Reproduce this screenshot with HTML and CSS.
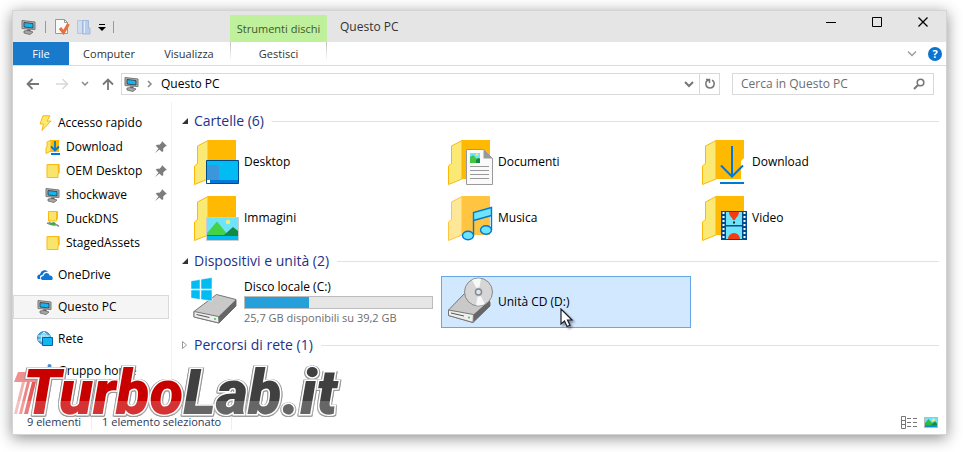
FILE: index.html
```html
<!DOCTYPE html>
<html lang="it">

<head>
    <meta charset="UTF-8" />
    <meta name="viewport" content="width=device-width,initial-scale=1.0" />
    <title>Questo PC</title>
    <link rel="stylesheet" href="styles.css">
</head>

<body>
    <svg class="sprite" aria-hidden="true">
        <symbol id="i-pc" viewBox="0 0 16 16">
            <path d="M1 1.500l13 1.500v7.500L1 9.500z" fill="#b4b4b4" stroke="#777" />
            <path d="M3 3.500l9 1v4.500L3 8z" fill="#18b4f0" stroke="#333" stroke-width=".8" />
            <path d="M6 10.500h3.500v1.500H6z" fill="#555" />
            <path d="M3 12l4-.5 5 1.500-3 2.500-6-1.500z" fill="#a8a8a8" stroke="#666" stroke-width=".8" />
        </symbol>
        <symbol id="i-folder" viewBox="0 0 16 16">
            <path d="M2 1.500h12V10l-1 .5v4H2z" fill="#f9e56c" stroke="#fbb911" />
            <path d="M12.500 1.500h2V10l-1.500.5z" fill="#fbb911" />
        </symbol>
        <symbol id="i-pin" viewBox="0 0 12 12">
            <path d="M7 0l5 5-1.500.3-2.300 2.200v2.800L7 11 4.500 8.500 0 12l3.500-4.500L1 5l.7-1.200h2.800L6.700 1.500z" fill="#7c7c7c" />
        </symbol>
        <symbol id="i-picture" viewBox="0 0 14 11">
            <rect x=".5" y=".5" width="13" height="10" fill="#6ee4fa" stroke="#bbb" />
            <circle cx="9.500" cy="3" r="1.500" fill="#f8ea72" />
            <path d="M1 8V6l3.500-4L8 6l3-2 2 2v2z" fill="#34b845" />
            <path d="M7 8l4-3 2 2v1z" fill="#128a42" />
            <path d="M1 8h12v2H1z" fill="#0a90cc" />
        </symbol>
        <symbol id="b-folder" viewBox="0 0 48 48">
            <path d="M17 2h28v39H17z" fill="#ffb900" />
            <path d="M3.500 46.500V28l3-2.500V8L17 2.500V41z" fill="#faea75" stroke="#f9b80c" />
        </symbol>
    </svg>

    <div class="window">
        <header class="titlebar">
            <div class="quick">
                <svg class="i16"><use href="#i-pc" /></svg>
                <span class="sep"></span>
                <button class="quick-btn" aria-label="Proprietà">
                    <svg width="16" height="17" viewBox="0 0 16 17">
                        <path d="M1.500 1.500h9l3 3v11h-12z" fill="#fafafa" stroke="#999" />
                        <path d="M10.500 1.500v3h3" fill="none" stroke="#999" />
                        <path d="M6 10l3.500 4.500L14.500 6" fill="none" stroke="#e8703c" stroke-width="3" />
                    </svg>
                </button>
                <button class="quick-btn folder" aria-label="Nuova cartella">
                    <svg width="14" height="16" viewBox="0 0 14 16">
                        <path d="M.5 1.500h7v13h-7z" fill="#cfddf0" stroke="#b4c6e0" />
                        <path d="M5.500 1.500h6V9h1.500v6H5.500z" fill="#b9cdea" stroke="#a3bade" />
                        <path d="M7.500 2v12" stroke="#e4edf8" />
                    </svg>
                </button>
                <button class="quick-btn" aria-label="Personalizza">
                    <svg width="8" height="8" viewBox="0 0 8 8"><path d="M1 1h6v1H1zM0 4h8L4 8z" /></svg>
                </button>
                <span class="sep"></span>
            </div>
            <div class="context">Strumenti dischi</div>
            <h1 class="title">Questo PC</h1>
            <div class="caption">
                <button aria-label="Riduci a icona"><svg width="12" height="12"><path d="M1 6.500h10" stroke="#000" /></svg></button>
                <button aria-label="Ingrandisci"><svg width="12" height="12"><path d="M1.500 1.500h9v9h-9z" fill="none" stroke="#000" /></svg></button>
                <button aria-label="Chiudi"><svg width="12" height="12"><path d="M1.500 1.500l9 9M10.500 1.500l-9 9" stroke="#000" stroke-width="1.300" /></svg></button>
            </div>
        </header>

        <nav class="ribbon">
            <button class="tab file">File</button>
            <button class="tab">Computer</button>
            <button class="tab">Visualizza</button>
            <button class="tab manage">Gestisci</button>
            <div class="ribbon-end">
                <button aria-label="Espandi barra"><svg width="10" height="7"><path d="M1 1.500l4 4 4-4" fill="none" stroke="#999" stroke-width="1.300" /></svg></button>
                <button class="help" aria-label="Guida">?</button>
            </div>
        </nav>

        <div class="navbar">
            <button class="nav-btn" aria-label="Indietro"><svg width="14" height="12"><path d="M13 6H2M6.500 1L1.500 6l5 5" fill="none" stroke="#777" stroke-width="1.800" /></svg></button>
            <button class="nav-btn" aria-label="Avanti"><svg width="14" height="12"><path d="M1 6h11M7.500 1l5 5-5 5" fill="none" stroke="#d8d8d8" stroke-width="1.500" /></svg></button>
            <button class="nav-btn recent" aria-label="Percorsi recenti"><svg width="8" height="6"><path d="M1 1l3 3 3-3" fill="none" stroke="#888" stroke-width="1.500" /></svg></button>
            <button class="nav-btn up" aria-label="Su"><svg width="12" height="12"><path d="M6 12V2M1 6.500l5-5 5 5" fill="none" stroke="#777" stroke-width="1.800" /></svg></button>
            <div class="address">
                <svg class="i16"><use href="#i-pc" /></svg>
                <svg class="crumb" width="6" height="8"><path d="M1 1l3 3-3 3" fill="none" stroke="#888" stroke-width="1.500" /></svg>
                <span class="path">Questo PC</span>
                <button class="drop" aria-label="Percorsi precedenti"><svg width="10" height="7"><path d="M1 1l4 4 4-4" fill="none" stroke="#777" stroke-width="2" /></svg></button>
                <button class="refresh" aria-label="Aggiorna"><svg width="12" height="12"><path d="M2 1.500h3.500V5M5 2C2 2.500 1.500 5 2 7c1 4 7 4 8 0 .5-2-.5-4-2-4.800" fill="none" stroke="#777" stroke-width="1.500" /></svg></button>
            </div>
            <div class="search">
                <input type="search" aria-label="Cerca" placeholder="Cerca in Questo PC">
                <svg width="12" height="12"><circle cx="7.500" cy="4.500" r="3.300" fill="none" stroke="#777" stroke-width="1.600" /><path d="M5 7L1 11" stroke="#777" stroke-width="2" /></svg>
            </div>
        </div>

        <div class="content">
            <nav class="sidebar">
                <a href="#" class="row">
                    <svg class="i16" viewBox="0 0 16 16"><path d="M6 .8h7L10 6h4L5 15.500 6.500 9H3z" fill="#fcea6a" stroke="#f7b320" /></svg>
                    Accesso rapido
                </a>
                <a href="#" class="row sub">
                    <svg class="i16" viewBox="0 0 16 16"><path d="M5 1h9v12H5z" fill="#ffb900" /><path d="M1 14.500V9l1-1V3l4-2v11z" fill="#f9e56c" stroke="#fbb911" /><path d="M10 2v9M6 7.500l4 4 4-4M6 15h9" fill="none" stroke="#0078d7" stroke-width="1.800" /></svg>
                    Download
                    <svg class="pin"><use href="#i-pin" /></svg>
                </a>
                <a href="#" class="row sub">
                    <svg class="i16"><use href="#i-folder" /></svg>
                    OEM Desktop
                    <svg class="pin"><use href="#i-pin" /></svg>
                </a>
                <a href="#" class="row sub">
                    <svg class="i16"><use href="#i-pc" /></svg>
                    shockwave
                    <svg class="pin"><use href="#i-pin" /></svg>
                </a>
                <a href="#" class="row sub">
                    <svg class="i16" viewBox="0 0 16 16"><path d="M3.500.5h9V8l-1 .5V10h-8z" fill="#f9e56c" stroke="#fbb911" /><path d="M11 1h2v7l-2 1z" fill="#fbb911" /><path d="M2 12l4 1.500 6 .5 2 1.500M4 11l3 3" fill="none" stroke="#888" stroke-width="1.500" /><path d="M5 12l4-1 2 1.500-2 2-4-1z" fill="#2fae4b" /></svg>
                    DuckDNS
                </a>
                <a href="#" class="row sub">
                    <svg class="i16"><use href="#i-folder" /></svg>
                    StagedAssets
                </a>
                <a href="#" class="row top">
                    <svg class="i16" viewBox="0 0 16 16"><path d="M1 12C-1 10 1 7 3 7.500 4 3 9 2 11 5 8 4 6 6 5.500 8 3 8 2.500 10 3.500 12z" fill="#0f6fc6" /><path d="M5 13c-2-1.500-1-4 1.500-4C7 5.500 11.500 5 12.500 8.500c3-.5 4 3 2.500 4.500z" fill="#0f78d4" /></svg>
                    OneDrive
                </a>
                <a href="#" class="row top selected">
                    <svg class="i16"><use href="#i-pc" /></svg>
                    Questo PC
                </a>
                <a href="#" class="row top">
                    <svg class="i16" viewBox="0 0 16 16"><circle cx="7" cy="7" r="6.400" fill="#4fb5e8" stroke="#1c7fc0" /><path d="M1 5h12M1 9h12M7 .5v13M7 1C3.500 4 3.500 10 7 13M7 1c3.500 3 3.500 6 3 9" fill="none" stroke="#d3effc" /><path d="M5.500 6.500h10v8h-10z" fill="#10b8f2" stroke="#0a5ea8" /></svg>
                    Rete
                </a>
                <a href="#" class="row top">
                    <svg class="i16" viewBox="0 0 16 16"><circle cx="2.500" cy="8" r="2.500" fill="#3b7fc4" /><circle cx="9.500" cy="8" r="4" fill="#5da58d" /><circle cx="12.500" cy="3" r="2" fill="#4b8cc8" /></svg>
                    Gruppo home
                </a>
            </nav>

            <main class="main">
                <h2 class="group"><svg width="8" height="8"><path d="M7 1v6H1z" fill="#333" /></svg>Cartelle (6)</h2>
                <div class="tiles">
                    <a href="#" class="tile">
                        <svg class="i48" viewBox="0 0 48 48">
                            <use href="#b-folder" />
                            <path d="M15.500 22.500h32v23h-32z" fill="#00bcf2" stroke="#004b8b" />
                            <path d="M16 27h12v15H16z" fill="#3c96dc" />
                            <path d="M16 42h31v3H16z" fill="#0078d7" />
                            <path d="M16 42h3v3h-3z" fill="#fff" />
                        </svg>
                        Desktop
                    </a>
                    <a href="#" class="tile">
                        <svg class="i48" viewBox="0 0 48 48">
                            <use href="#b-folder" />
                            <path d="M21.500 11.500h17l9 9v26h-26z" fill="#fafafa" stroke="#999" />
                            <path d="M38.500 11.500v9h9z" fill="#999" />
                            <path d="M25 15h10v10H25z" fill="#6ee4fa" />
                            <path d="M25 25v-6l3-2 4 4 3-1v5z" fill="#42c83c" />
                            <path d="M31 25v-3l2-2 2 1v4z" fill="#128a42" />
                            <circle cx="32" cy="16.500" r="1.200" fill="#f8ea72" />
                            <path d="M25 28.500h19M25 32.500h19M25 36.500h19M25 40.500h19" stroke="#999" />
                        </svg>
                        Documenti
                    </a>
                    <a href="#" class="tile">
                        <svg class="i48" viewBox="0 0 48 48">
                            <use href="#b-folder" />
                            <path d="M45 20l-3 3v18h3z" fill="#fff" />
                            <path d="M33 8v30M22 27.500l11 11 11-11M21 45h24" fill="none" stroke="#0078d7" stroke-width="2" />
                        </svg>
                        Download
                    </a>
                    <a href="#" class="tile">
                        <svg class="i48" viewBox="0 0 48 48">
                            <use href="#b-folder" />
                            <path d="M15.500 23.500h32v23h-32z" fill="#6ee4fa" stroke="#ccc" />
                            <circle cx="37" cy="28" r="2.200" fill="#f8ea72" />
                            <path d="M16 39l10-11.500L37 41H16z" fill="#46d246" />
                            <path d="M33 41l9-8 5 4v4z" fill="#128a42" />
                            <path d="M16 41h31v1.500H16z" fill="#128a42" />
                            <path d="M16 42h31v4H16z" fill="#00bcf2" />
                        </svg>
                        Immagini
                    </a>
                    <a href="#" class="tile">
                        <svg class="i48" viewBox="0 0 48 48">
                            <path d="M17 2h28v39H17z" fill="#ffc440" />
                            <path d="M3.500 46.500V28l3-2.500V8L17 2.500V41z" fill="#ffe798" stroke="#ffc440" />
                            <path d="M28.500 18.500l18-5v8l-18 5z" fill="#6ee4fa" />
                            <path d="M28.500 42V18.500l18-5V36M28.500 26.500l18-5" fill="none" stroke="#0078d7" stroke-width="1.400" />
                            <ellipse cx="23" cy="41.500" rx="5.500" ry="4.300" fill="#6ee4fa" stroke="#0078d7" stroke-width="1.400" />
                            <ellipse cx="41" cy="36" rx="5.500" ry="4.300" fill="#6ee4fa" stroke="#0078d7" stroke-width="1.400" />
                        </svg>
                        Musica
                    </a>
                    <a href="#" class="tile">
                        <svg class="i48" viewBox="0 0 48 48">
                            <use href="#b-folder" />
                            <path d="M22 17h26v29H22z" fill="#004b8b" />
                            <path d="M27 18h16v13H27zM27 32.500h16V45H27z" fill="#6ee4fa" />
                            <path d="M30 18h10c0 4-3 5-4 8h-2c-1-3-4-4-4-8z" fill="#f43c14" />
                            <path d="M34 27.500h2v2h-2z" fill="#222" />
                            <path d="M29 45a6 6 0 0 1 12 0z" fill="#f43c14" />
                            <path d="M24.500 18v28M45.500 18v28" stroke="#fff" stroke-width="2" stroke-dasharray="2 2" />
                        </svg>
                        Video
                    </a>
                </div>

                <h2 class="group"><svg width="8" height="8"><path d="M7 1v6H1z" fill="#333" /></svg>Dispositivi e unità (2)</h2>
                <div class="tiles">
                    <a href="#" class="tile">
                        <svg class="i48" viewBox="0 0 48 48">
                            <path d="M3 33.500L25.500 16.500 45 21.500V28L28 45 3 39z" fill="#c9c9c9" stroke="#777" />
                            <path d="M27.500 38.500L45 21.500V28L28 45z" fill="#666" />
                            <path d="M3 33.500l24.500 5L28 45 3 39z" fill="#eee" stroke="#777" />
                            <path d="M5.500 36.500l13 3" stroke="#555" />
                            <circle cx="24" cy="41" r="1" fill="#32d050" />
                            <path d="M0 3l9-1.500V11H0zM10 1.300L21-.5V11H10zM0 12h9v9.500L0 20zM10 12h11v11l-11-1.500z" fill="#00bcf2" stroke="#fff" stroke-width=".5" />
                        </svg>
                        <span class="drive">
                            <span>Disco locale (C:)</span>
                            <progress value="34" max="100" aria-label="Spazio usato"></progress>
                            <span class="free">25,7 GB disponibili su 39,2 GB</span>
                        </span>
                    </a>
                    <a href="#" class="tile selected">
                        <svg class="i48" viewBox="0 0 48 48">
                            <path d="M3.500 32L19 16l26 8v4L28 44.500l-24.500-7z" fill="#c9c9c9" stroke="#777" />
                            <path d="M28.500 36.500L45 22v6L28 44.500z" fill="#666" />
                            <path d="M3.500 32l25 4.500-.5 8-24.500-7z" fill="#eee" stroke="#777" />
                            <path d="M6 35l13 3" stroke="#555" />
                            <circle cx="24" cy="39.500" r="1" fill="#32d050" />
                            <circle cx="33.500" cy="14" r="14" fill="#d6d6d6" stroke="#888" />
                            <path d="M33.500 14L27 2a13.500 13.500 0 0 1 9-1.200zM33.500 14L40 26a13.500 13.500 0 0 1-9 1.300z" fill="#f8f8f8" />
                            <circle cx="33.500" cy="14" r="4.500" fill="#ccc" />
                            <circle cx="33.500" cy="14" r="3" fill="#d4e8fb" stroke="#888" stroke-width="1.300" />
                        </svg>
                        Unità CD (D:)
                        <svg class="cursor" width="14" height="20" viewBox="0 0 14 20"><path d="M1 1v15l3.500-3 2.500 5.500 3-1.300-2.500-5.200H12z" fill="#fff" stroke="#1c1c2c" stroke-width="1.200" /></svg>
                    </a>
                </div>

                <h2 class="group closed"><svg width="8" height="8"><path d="M1.500.5v7l4-3.500z" fill="#fff" stroke="#999" /></svg>Percorsi di rete (1)</h2>
            </main>
        </div>

        <footer class="status">
            <span class="count">9 elementi</span>
            <span class="count">1 elemento selezionato</span>
            <div class="views">
                <button aria-label="Dettagli"><svg width="16" height="13" viewBox="0 0 16 13"><path d="M.5.5h4v12h-4zM.5 4.500h4M.5 8.500h4M6 2.500h4M12 2.500h4M6 6.500h4M12 6.500h4M6 10.500h4M12 10.500h4" fill="none" stroke="#777" /></svg></button>
                <button aria-label="Icone grandi"><svg width="14" height="11"><use href="#i-picture" /></svg></button>
            </div>
        </footer>

        <div class="watermark">
            <svg class="streaks" width="30" height="44" viewBox="0 0 30 44">
                <path d="M5 1h25l-3 10H1z" fill="#d22" opacity=".5" />
                <path d="M9 11h3L4 43H1z" fill="#d22" opacity=".35" />
                <path d="M14 11h3L9 43H6z" fill="#d22" opacity=".55" />
                <path d="M19 11h4l-8 32h-4z" fill="#d22" opacity=".75" />
            </svg>
            <span class="brand"><span class="turbo">Turbo</span><span class="lab">Lab.it</span></span>
        </div>
    </div>
</body>

</html>
```
FILE: styles.css
```css
* {
    margin: 0;
    padding: 0;
    box-sizing: border-box;
}

body {
    min-height: 100vh;
    display: flex;
    padding: 10px 16px 17px 12px;
    font-family: "Open Sans", "Noto Sans", sans-serif;
    font-size: 12px;
    line-height: 16px;
    background: #fff;
    color: #000;
}

button {
    border: none;
    background: none;
    font: inherit;
    color: inherit;
    display: flex;
    align-items: center;
    justify-content: center;
}

a {
    color: inherit;
    text-decoration: none;
}

svg {
    flex-shrink: 0;
    display: block;
}

.sprite {
    position: absolute;
    width: 0;
    height: 0;
}

.i16 {
    width: 16px;
    height: 16px;
}

.i48 {
    width: 48px;
    height: 48px;
    overflow: visible;
}

.window {
    position: relative;
    flex: 1;
    display: flex;
    flex-direction: column;
    border: 1px solid #d4d4d4;
    background: #fff;
    box-shadow: 0 3px 14px rgba(0, 0, 0, 0.45);
}

/* Title bar */
.titlebar {
    display: flex;
    height: 31px;
    background: #e5e5e5;
}

.quick {
    display: flex;
    align-items: center;
    gap: 8px;
    width: 217px;
    padding-left: 8px;
}

.sep {
    width: 1px;
    height: 12px;
    background: #999;
}

.quick-btn {
    margin-right: -1px;
}

.context {
    width: 97px;
    margin-top: 4px;
    font-size: 11px;
    line-height: 28px;
    text-align: center;
    background: #bff09b;
    color: #3b5a2b;
    white-space: nowrap;
}

.title {
    padding-left: 13px;
    font-size: 12px;
    font-weight: 400;
    line-height: 32px;
    color: #333;
}

.caption {
    display: flex;
    margin-left: auto;
}

.caption button {
    width: 46px;
    height: 22px;
}

/* Ribbon */
.ribbon {
    display: flex;
    height: 24px;
    font-size: 11px;
    border-bottom: 1px solid #dadbdc;
}

.tab {
    width: 80px;
    color: #333;
}

.tab.file {
    width: 56px;
    background: #1979ca;
    color: #fff;
}

.tab.manage {
    width: 97px;
    margin-left: 1px;
    border: solid;
    border-width: 0 1px;
    border-image: linear-gradient(#bbb, #fff 80%) 1;
}

.ribbon-end {
    display: flex;
    align-items: center;
    gap: 11px;
    margin-left: auto;
    padding-right: 4px;
}

.help {
    width: 14px;
    height: 14px;
    border-radius: 50%;
    background: #0a74d0;
    color: #fff;
    font-weight: 700;
}

/* Address bar */
.navbar {
    display: flex;
    align-items: center;
    padding: 7px 12px 7px 13px;
}

.nav-btn {
    width: 14px;
    margin-right: 15px;
}

.nav-btn.recent {
    width: 8px;
    margin: 0 13px 0 -3px;
}

.nav-btn.up {
    width: 12px;
    margin-right: 7px;
}

.address {
    display: flex;
    align-items: center;
    flex: 1;
    height: 22px;
    padding-left: 2px;
    border: 1px solid #d9d9d9;
}

.crumb {
    margin: 0 8px 0 7px;
}

.path {
    flex: 1;
}

.drop {
    width: 20px;
    height: 20px;
}

.refresh {
    width: 20px;
    height: 20px;
    border-left: 1px solid #d9d9d9;
}

.search {
    display: flex;
    align-items: center;
    width: 202px;
    height: 22px;
    margin-left: 12px;
    padding: 0 8px;
    border: 1px solid #d9d9d9;
}

.search input {
    flex: 1;
    min-width: 0;
    border: none;
    outline: none;
    background: none;
    font: inherit;
}

.search input::placeholder {
    color: #6d6d6d;
}

/* Body */
.content {
    display: flex;
    flex: 1;
}

.sidebar {
    width: 159px;
    padding: 9px 2px 0 0;
    border-right: 1px solid #f2f2f2;
}

.row {
    display: flex;
    align-items: center;
    gap: 5px;
    height: 24px;
    padding: 0 1px 0 23px;
    border: 1px solid transparent;
    white-space: nowrap;
}

.row.sub {
    padding-left: 31px;
}

.row.top {
    margin-top: 8px;
}

.row.selected {
    background: #f5f5f5;
    border-color: #d9d9d9;
}

.pin {
    width: 12px;
    height: 12px;
    margin-left: auto;
}

.main {
    flex: 1;
    padding: 2px 0 0 9px;
}

.group {
    display: flex;
    align-items: center;
    gap: 5px;
    height: 30px;
    margin: 2px 7px 0 0;
    font-size: 14px;
    font-weight: 400;
    color: #1e3287;
}

.group::after {
    content: '';
    flex: 1;
    height: 1px;
    margin-left: 3px;
    background: #e2e2e2;
}

.tiles {
    display: grid;
    grid-template-columns: repeat(auto-fill, 250px);
    gap: 4px;
    padding-left: 6px;
}

.tile {
    position: relative;
    display: flex;
    align-items: center;
    gap: 5px;
    height: 52px;
    padding: 0 3px;
    border: 1px solid transparent;
}

.tile.selected {
    background: #d1e8ff;
    border-color: #66a7e8;
}

.drive {
    display: flex;
    flex-direction: column;
    flex: 1;
}

.drive progress {
    appearance: none;
    width: 100%;
    height: 13px;
    margin: 1px 0;
    border: 1px solid #bcbcbc;
    background: #e6e6e6;
}

.drive progress::-webkit-progress-bar {
    background: #e6e6e6;
}

.drive progress::-webkit-progress-value {
    background: #26a0da;
}

.free {
    font-size: 11px;
    color: #6d6d6d;
}

.cursor {
    position: absolute;
    left: 118px;
    top: 31px;
    filter: drop-shadow(2px 2px 1px rgba(0, 0, 0, 0.4));
}

/* Status bar */
.status {
    display: flex;
    align-items: center;
    height: 24px;
    padding: 0 8px 0 4px;
    font-size: 11px;
    color: #1e395b;
}

.count {
    padding: 0 10px;
    border-right: 1px solid #eee;
}

.views {
    display: flex;
    align-items: center;
    gap: 7px;
    margin-left: auto;
}

/* Logo laid over the lower left corner */
.watermark {
    position: absolute;
    left: 0;
    bottom: 17px;
    display: flex;
    align-items: center;
    pointer-events: none;
}

.streaks {
    margin-right: -20px;
}

.brand {
    font-family: Roboto, sans-serif;
    font-size: 62px;
    font-style: italic;
    font-weight: 900;
    line-height: 48px;
    white-space: nowrap;
    -webkit-text-stroke: 3px #fff;
    paint-order: stroke fill;
    filter: drop-shadow(1px 0 0 #999) drop-shadow(-1px 0 0 #999) drop-shadow(0 1px 0 #999);
}

/* Paler band across the foot of the letters */
.watermark::after {
    content: '';
    position: absolute;
    left: 0;
    right: 0;
    bottom: 3px;
    height: 13px;
    background: rgba(255, 255, 255, 0.2);
}

.turbo {
    color: #c80000;
}

.lab {
    color: #404040;
}
```
